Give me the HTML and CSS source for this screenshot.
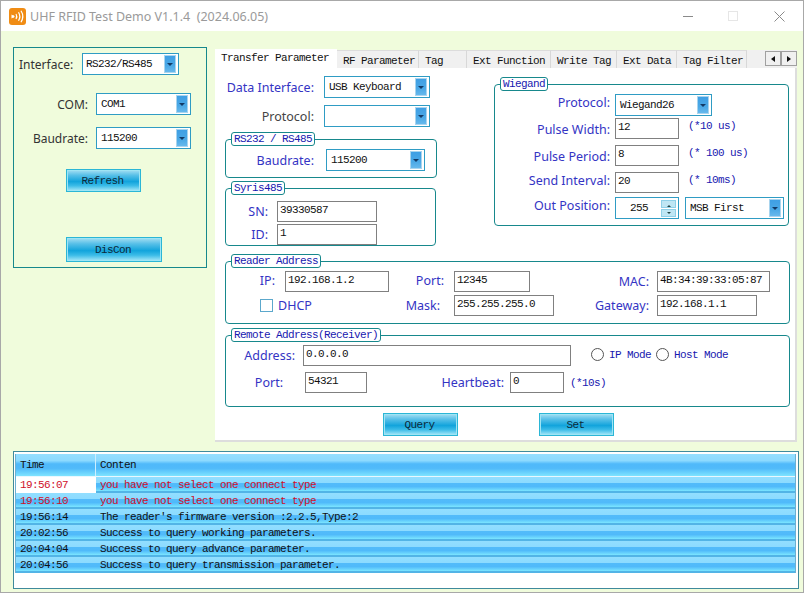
FILE: index.html
```html
<!doctype html>
<html>
<head>
	<meta charset="utf-8">
	<title>UHF RFID Test Demo V1.1.4</title>
	<link rel="stylesheet" href="styles.css">
</head>

<body>
	<div class="window">
		<div class="titlebar">
			<svg class="app-icon" width="17" height="17" viewBox="0 0 17 17">
				<rect width="17" height="17" rx="3" fill="#f08c14"/>
				<circle cx="4.2" cy="8.5" r="1.2" fill="#fff"/>
				<path d="M2.5 6.6 L5.5 8.5 L2.5 10.4 Z" fill="#fff"/>
				<path d="M7 6 Q8.6 8.5 7 11 M9.5 4.3 Q12.2 8.5 9.5 12.7 M12 2.8 Q15.6 8.5 12 14.2" fill="none" stroke="#fff" stroke-width="1.2"/>
			</svg>
			<span class="title-text">UHF RFID Test Demo V1.1.4&nbsp; (2024.06.05)</span>
			<span class="win-min"></span>
			<span class="win-max"></span>
			<svg class="win-close" width="11" height="11" viewBox="0 0 11 11">
				<path d="M0.5 0.5 L10.5 10.5 M10.5 0.5 L0.5 10.5" stroke="#8a8a8a" stroke-width="1" fill="none"/>
			</svg>
		</div>

		<div class="main">
			<!-- connect panel -->
			<div class="conn">
				<div class="conn-row first">
					<span class="conn-label">Interface:</span>
					<div class="combo conn-iface"><span>RS232/RS485</span><i class="arrow"></i></div>
				</div>
				<div class="conn-row com">
					<span class="conn-label right">COM:</span>
					<div class="combo conn-wide"><span>COM1</span><i class="arrow"></i></div>
				</div>
				<div class="conn-row baud">
					<span class="conn-label right">Baudrate:</span>
					<div class="combo conn-wide"><span>115200</span><i class="arrow"></i></div>
				</div>
				<div class="btn btn-refresh">Refresh</div>
				<div class="btn btn-discon">DisCon</div>
			</div>

			<div class="tabs-wrap">
				<div class="tabs">
					<div class="tab active">Transfer Parameter</div>
					<div class="tab">RF Parameter</div>
					<div class="tab">Tag</div>
					<div class="tab">Ext Function</div>
					<div class="tab">Write Tag</div>
					<div class="tab">Ext Data</div>
					<div class="tab">Tag Filter</div>
					<div class="tab-scroll">
						<span class="scroll-btn"><i class="tri-left"></i></span>
						<span class="scroll-btn"><i class="tri-right"></i></span>
					</div>
				</div>

				<div class="page">
					<div class="top">
						<div class="top-left">
							<div class="form-row">
								<span class="lbl lbl-data">Data Interface:</span>
								<div class="combo w106"><span>USB Keyboard</span><i class="arrow"></i></div>
							</div>
							<div class="form-row second">
								<span class="lbl lbl-data dark">Protocol:</span>
								<div class="combo w106"><span></span><i class="arrow"></i></div>
							</div>

							<fieldset class="group rs">
								<legend>RS232 / RS485</legend>
								<div class="form-row">
									<span class="lbl lbl-baud">Baudrate:</span>
									<div class="combo w99"><span>115200</span><i class="arrow"></i></div>
								</div>
							</fieldset>

							<fieldset class="group syris">
								<legend>Syris485</legend>
								<div class="form-row">
									<span class="lbl lbl-syris">SN:</span>
									<input class="field w100" value="39330587">
								</div>
								<div class="form-row id">
									<span class="lbl lbl-syris">ID:</span>
									<input class="field w100" value="1">
								</div>
							</fieldset>
						</div>

						<fieldset class="group wiegand">
							<legend>Wiegand</legend>
							<div class="wg-grid">
								<span class="lbl">Protocol:</span>
								<div class="combo w97 wg-span"><span>Wiegand26</span><i class="arrow"></i></div>

								<span class="lbl lbl-low">Pulse Width:</span>
								<input class="field w64" value="12">
								<span class="unit">(*10 us)</span>

								<span class="lbl lbl-low">Pulse Period:</span>
								<input class="field w64" value="8">
								<span class="unit">(* 100 us)</span>

								<span class="lbl">Send Interval:</span>
								<input class="field w64" value="20">
								<span class="unit">(* 10ms)</span>

								<span class="lbl">Out Position:</span>
								<div class="spin">
									<span>255</span>
									<div class="spin-btns"><i class="spin-up"></i><i class="spin-down"></i></div>
								</div>
								<div class="combo w99 wg-msb"><span>MSB First</span><i class="arrow"></i></div>
							</div>
						</fieldset>
					</div>

					<fieldset class="group reader">
						<legend>Reader Address</legend>
						<div class="rd-grid">
							<span class="lbl lbl-up">IP:</span>
							<input class="field w104" value="192.168.1.2">
							<span class="lbl lbl-up">Port:</span>
							<input class="field w76" value="12345">
							<span class="lbl lbl-mac">MAC:</span>
							<input class="field w113" value="4B:34:39:33:05:87">

							<label class="dhcp"><i class="check"></i><span>DHCP</span></label>
							<span class="lbl lbl-mask">Mask:</span>
							<input class="field w100" value="255.255.255.0">
							<span class="lbl lbl-mac">Gateway:</span>
							<input class="field w100" value="192.168.1.1">
						</div>
					</fieldset>

					<fieldset class="group remote">
						<legend>Remote Address(Receiver)</legend>
						<div class="form-row">
							<span class="lbl lbl-addr">Address:</span>
							<input class="field w268" value="0.0.0.0">
							<div class="modes">
								<span class="radio first"></span><span class="mono-blue">IP Mode</span>
								<span class="radio"></span><span class="mono-blue">Host Mode</span>
							</div>
						</div>
						<div class="form-row remote-2">
							<span class="lbl lbl-rport">Port:</span>
							<input class="field w62" value="54321">
							<span class="lbl lbl-beat">Heartbeat:</span>
							<input class="field w54" value="0">
							<span class="unit beat-unit">(*10s)</span>
						</div>
					</fieldset>

					<div class="actions">
						<div class="btn btn-action">Query</div>
						<div class="btn btn-action">Set</div>
					</div>
				</div>
			</div>
		</div>

		<!-- log list -->
		<div class="log">
			<div class="log-list">
				<div class="log-head">
					<div class="log-time">Time</div>
					<div class="log-msg">Conten</div>
				</div>
				<div class="log-row err sel">
					<div class="log-time">19:56:07</div>
					<div class="log-msg">you have not select one connect type</div>
				</div>
				<div class="log-row err">
					<div class="log-time">19:56:10</div>
					<div class="log-msg">you have not select one connect type</div>
				</div>
				<div class="log-row">
					<div class="log-time">19:56:14</div>
					<div class="log-msg">The reader's firmware version :2.2.5,Type:2</div>
				</div>
				<div class="log-row">
					<div class="log-time">20:02:56</div>
					<div class="log-msg">Success to query working parameters.</div>
				</div>
				<div class="log-row">
					<div class="log-time">20:04:04</div>
					<div class="log-msg">Success to query advance parameter.</div>
				</div>
				<div class="log-row">
					<div class="log-time">20:04:56</div>
					<div class="log-msg">Success to query transmission parameter.</div>
				</div>
			</div>
		</div>
	</div>
</body>
</html>
```

FILE: styles.css
```css
* {
	box-sizing: border-box;
}
html, body {
	margin: 0;
	padding: 0;
}
body {
	width: 804px;
	height: 593px;
	overflow: hidden;
	font-family: "Liberation Mono", monospace;
	font-size: 11px;
	letter-spacing: -0.6px;
	color: #111;
}
.window {
	width: 804px;
	height: 593px;
	border: 1px solid #a8a8a8;
	background: #f0fcdc;
}

/* title bar */
.titlebar {
	display: flex;
	align-items: center;
	height: 30px;
	padding-left: 8px;
	background: #fff;
}
.app-icon {
	flex: none;
	margin-top: 1px;
}
.title-text {
	margin-left: 4px;
	font-family: "Noto Sans", sans-serif;
	font-size: 12.5px;
	letter-spacing: 0;
	color: #9a9a9a;
	white-space: nowrap;
}
.win-min {
	width: 10px;
	height: 1px;
	margin-left: auto;
	background: #8a8a8a;
}
.win-max {
	width: 10px;
	height: 10px;
	margin-left: 35px;
	border: 1px solid #e6e6e6;
}
.win-close {
	margin-left: 36px;
	margin-right: 18px;
}

.main {
	display: flex;
	align-items: flex-start;
	height: 420px;
	padding: 16px 0 0 12px;
}

/* labels */
.lbl, .conn-label, .dhcp span {
	font-family: "Noto Sans", sans-serif;
	font-size: 12.5px;
	letter-spacing: 0;
	color: #3434c4;
	white-space: nowrap;
}
.dark {
	color: #444;
}

/* combo box */
.combo {
	display: flex;
	align-items: center;
	justify-content: space-between;
	flex: none;
	height: 22px;
	padding: 0 2px 0 4px;
	border: 1px solid #2f9cc4;
	background: #fff;
	font-size: 11px;
}
.arrow {
	position: relative;
	display: block;
	width: 12px;
	height: 18px;
	border: 1px solid #a8d4ee;
	background: linear-gradient(#3f9fe4, #4aa8e6 60%, #66b8ec);
}
.arrow::after {
	content: "";
	position: absolute;
	left: 2px;
	top: 7px;
	border-left: 3px solid transparent;
	border-right: 3px solid transparent;
	border-top: 3px solid #123a66;
}
.w97 { width: 97px; }
.w99 { width: 99px; }
.w106 { width: 106px; }

/* text box */
.field {
	display: block;
	flex: none;
	height: 21px;
	margin: 0;
	padding: 0 0 3px 2px;
	border: 1px solid #808080;
	border-radius: 0;
	outline: none;
	background: #fff;
	font-family: "Liberation Mono", monospace;
	font-size: 11px;
	letter-spacing: -0.6px;
	color: #111;
}
.w54 { width: 54px; }
.w62 { width: 62px; }
.w64 { width: 64px; }
.w76 { width: 76px; }
.w100 { width: 100px; }
.w104 { width: 104px; }
.w113 { width: 113px; }
.w268 { width: 268px; }

/* buttons */
.btn {
	display: flex;
	align-items: center;
	justify-content: center;
	padding-right: 2px;
	border: 1px solid #2bb6d6;
	box-shadow: inset 0 0 0 1px #9fe4f4;
	background: linear-gradient(#a6dff2, #58c0e8 25%, #12a4dc 55%, #3cbce8 75%, #a8e8f8);
	font-size: 11px;
	color: #0c2a3a;
}
.btn-refresh {
	width: 75px;
	height: 23px;
	margin: 20px 0 0 52px;
}
.btn-discon {
	width: 96px;
	height: 25px;
	margin: 45px 0 0 52px;
}

/* connect panel */
.conn {
	flex: none;
	width: 194px;
	height: 221px;
	padding-top: 5px;
	border: 1px solid #17888c;
}
.conn-row {
	display: flex;
	align-items: center;
}
.conn-row.com {
	margin-top: 18px;
}
.conn-row.baud {
	margin-top: 12px;
}
.conn-label {
	width: 68px;
	padding-left: 5px;
	color: #333;
	font-size: 12px;
}
.conn-label.right {
	width: 82px;
	padding: 0 8px 0 0;
	text-align: right;
}
.conn-iface {
	width: 97px;
	padding-left: 3px;
}
.conn-wide {
	width: 95px;
}

/* tabs */
.tabs-wrap {
	flex: none;
	width: 582px;
	margin-left: 8px;
	padding-top: 2px;
}
.tabs {
	display: grid;
	grid-template-columns: 122px 82px 48px 84px 66px 60px 70px 1fr;
	align-items: end;
	height: 19px;
	background: linear-gradient(#f0fcdc 1px, #f0f0f0 1px);
}
.tab {
	height: 18px;
	padding: 4px 0 0 6px;
	border-top: 1px solid #dcdcdc;
	border-right: 1px solid #d8d8d8;
	background: #f0f0f0;
	font-size: 11px;
	white-space: nowrap;
}
.tab.active {
	height: 19px;
	padding: 3px 0 0 6px;
	border: 0;
	background: #fff;
}
.tab-scroll {
	display: flex;
	justify-content: flex-end;
	align-self: start;
	padding: 2px 0 0 0;
}
.scroll-btn {
	display: flex;
	align-items: center;
	justify-content: center;
	width: 16px;
	height: 15px;
	border: 1px solid #a0a0a0;
	background: #f0f0f0;
}
.tri-left, .tri-right {
	display: block;
	border-top: 3px solid transparent;
	border-bottom: 3px solid transparent;
}
.tri-left {
	border-right: 4px solid #111;
}
.tri-right {
	border-left: 4px solid #111;
}

/* page */
.page {
	height: 374px;
	padding: 8px 0 0 10px;
	border-right: 2px solid #dddddd;
	border-bottom: 2px solid #dddddd;
	background: #fff;
}
.top {
	display: flex;
	align-items: flex-start;
}
.top-left {
	flex: none;
	width: 212px;
}
.form-row {
	display: flex;
	align-items: center;
}
.form-row.second {
	margin-top: 7px;
}
.form-row.id {
	margin-top: 2px;
}
.lbl-data {
	width: 99px;
	padding-right: 10px;
	text-align: right;
}
.lbl-baud {
	width: 100px;
	padding-right: 12px;
	text-align: right;
}
.lbl-syris {
	width: 51px;
	padding-right: 9px;
	text-align: right;
}

/* group boxes */
.group {
	min-width: 0;
	margin: 0;
	padding: 0;
	border: 1px solid #17888c;
	border-radius: 4px;
}
.group legend {
	margin-left: 5px;
	padding: 0 2px;
	height: 14px;
	line-height: 12px;
	border: 1px solid #17888c;
	border-radius: 3px;
	background: #fff;
	font-size: 11px;
	color: #1818b0;
	white-space: nowrap;
}
.rs {
	margin-top: 5px;
	padding: 3px 0 6px;
}
.syris {
	width: 211px;
	margin-top: 3px;
	padding: 6px 0 0;
}
.wiegand {
	flex: none;
	width: 295px;
	margin: 1px 0 0 57px;
	padding: 3px 0 6px;
}
.wg-grid {
	display: grid;
	grid-template-columns: 120px 64px 105px;
	grid-template-rows: 24px 27px 27px 25px 22px;
}
.wg-grid .lbl {
	padding-right: 5px;
	text-align: right;
}
.wg-grid .lbl-low {
	padding-top: 3px;
}
.wg-span {
	grid-column: span 2;
}
.wg-msb {
	margin-left: 6px;
}
.unit, .mono-blue {
	font-size: 11px;
	color: #1818b0;
	white-space: nowrap;
}
.wg-grid .unit {
	padding: 2px 0 0 9px;
}
.spin {
	display: flex;
	align-items: center;
	justify-content: space-between;
	height: 22px;
	padding: 0 2px 0 14px;
	border: 1px solid #2f9cc4;
	background: #fff;
}
.spin-btns {
	display: flex;
	flex-direction: column;
	gap: 1px;
}
.spin-btns i {
	display: flex;
	justify-content: center;
	width: 15px;
	height: 8px;
	padding-top: 2px;
	background: #bfe6f4;
	border: 1px solid #8fd0e8;
}
.spin-up::after {
	content: "";
	border-left: 2px solid transparent;
	border-right: 2px solid transparent;
	border-bottom: 2px solid #244;
}
.spin-down::after {
	content: "";
	border-left: 2px solid transparent;
	border-right: 2px solid transparent;
	border-top: 2px solid #244;
}

/* reader address */
.reader {
	margin-top: 8px;
	width: 565px;
	padding: 3px 0 7px;
}
.rd-grid {
	display: grid;
	grid-template-columns: 59px 104px 65px 100px 103px 113px;
	grid-template-rows: 21px 21px;
	row-gap: 3px;
	align-items: center;
}
.rd-grid .lbl {
	padding-right: 10px;
	text-align: right;
}
.rd-grid .lbl-up {
	padding-bottom: 2px;
}
.rd-grid .lbl-mask {
	padding-right: 14px;
}
.rd-grid .lbl-mac {
	padding-right: 8px;
}
.dhcp {
	grid-column: span 2;
	display: flex;
	align-items: center;
	padding-left: 34px;
}
.check {
	display: block;
	width: 13px;
	height: 13px;
	margin-right: 5px;
	border: 1px solid #5ca8cc;
	background: #fff;
}

/* remote address */
.remote {
	margin-top: 4px;
	width: 565px;
	padding: 3px 0 13px;
}
.remote-2 {
	margin-top: 6px;
}
.lbl-addr {
	width: 77px;
	padding-right: 8px;
	text-align: right;
}
.lbl-rport {
	width: 79px;
	padding-right: 22px;
	text-align: right;
}
.lbl-beat {
	width: 143px;
	padding-right: 6px;
	text-align: right;
}
.modes {
	display: flex;
	align-items: center;
	padding-bottom: 2px;
}
.radio {
	flex: none;
	width: 13px;
	height: 13px;
	margin: 0 5px 0 5px;
	border: 1px solid #555;
	border-radius: 50%;
	background: #fff;
}
.radio.first {
	margin-left: 20px;
}
.beat-unit {
	margin-left: 6px;
}

.actions {
	display: flex;
	gap: 81px;
	margin-top: 6px;
	padding-left: 158px;
}
.btn-action {
	width: 75px;
	height: 23px;
}

/* log list */
.log {
	width: 786px;
	height: 138px;
	margin-left: 12px;
	padding: 2px 2px 0 1px;
	border: 1px solid #3f8a9c;
	background: #fff;
}
.log-list {
	width: 781px;
	border-right: 1px solid #6cb0d0;
	border-left: 1px solid #6cb0d0;
}
.log-head, .log-row {
	display: flex;
}
.log-head {
	height: 23px;
	background: linear-gradient(#95dfff, #8cdaff 30%, #4fb9fa 45%, #50bafa 65%, #7ee4ff);
	border-bottom: 1px solid #e8f8ff;
}
.log-head .log-time {
	border-right: 1px solid #cdeeff;
	line-height: 23px;
}
.log-head .log-msg {
	line-height: 23px;
}
.log-row {
	height: 16px;
	line-height: 17px;
	background: linear-gradient(#92deff, #8cdbff 35%, #52bbfa 40%, #50bafa 60%, #7ce6ff 88%, #52b4e6 88%);
}
.log-time {
	flex: none;
	width: 80px;
	padding-left: 4px;
}
.log-msg {
	padding-left: 4px;
	white-space: pre;
}
.log-row.err {
	color: #d0102a;
}
.log-row.sel .log-time {
	background: #fff;
}
```
